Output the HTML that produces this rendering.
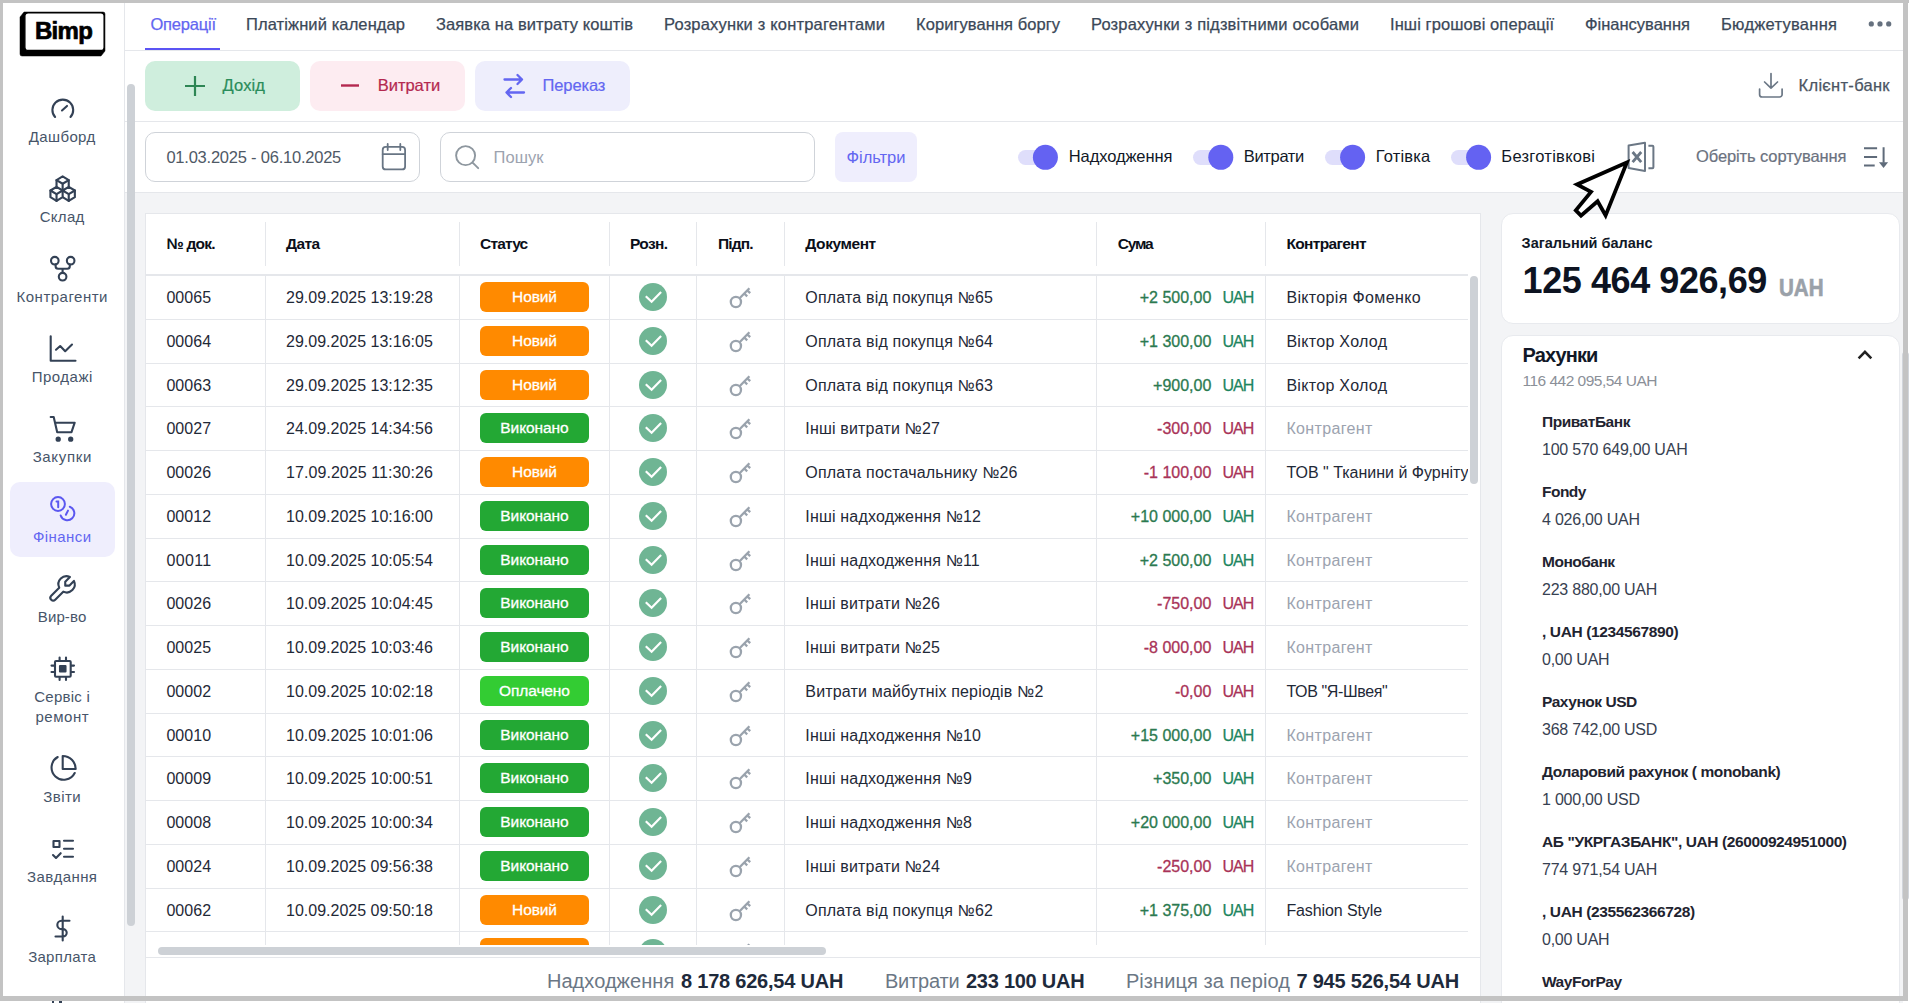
<!DOCTYPE html>
<html><head><meta charset="utf-8"><style>
html,body{margin:0;padding:0;}
body{width:1909px;height:1003px;overflow:hidden;position:relative;background:#fff;font-family:"Liberation Sans", sans-serif;}
.t{position:absolute;white-space:nowrap;line-height:1;}
.r{position:absolute;}
.clip{position:absolute;overflow:hidden;}
svg.ov{position:absolute;left:0;top:0;}
</style></head><body>
<div class="r" style="left:125px;top:193px;width:1778px;height:810px;background:#f3f4f6;"></div>
<div class="r" style="left:125px;top:50px;width:1778px;height:1px;background:#e5e7eb;"></div>
<div class="r" style="left:125px;top:121px;width:1778px;height:1px;background:#e5e7eb;"></div>
<div class="r" style="left:125px;top:192px;width:1778px;height:1px;background:#e5e7eb;"></div>
<div class="r" style="left:124px;top:0px;width:1px;height:1003px;background:#e5e7eb;"></div>
<svg class="r" style="left:0;top:0" width="120" height="70"><path d="M24 12H103A2 2 0 0 1 105 14V51L101 56H22A2 2 0 0 1 20 54V17Z" fill="#000" stroke="#000" stroke-width="0.5" stroke-linejoin="round"/><rect x="24.9" y="12.9" width="79.2" height="37.6" rx="3.2" fill="#fff" stroke="#000" stroke-width="1.3"/></svg>
<div class="t" style="left:35.00px;top:19px;font-size:24.0px;color:#000;font-weight:700;letter-spacing:-0.733px;-webkit-text-stroke:0.7px #000;">Bimp</div>
<div class="r" style="left:10px;top:482px;width:105px;height:75px;background:#efeefd;border-radius:10px;"></div>
<div class="t" style="left:28.80px;top:129px;font-size:15.0px;color:#475569;letter-spacing:0.364px;">Дашборд</div>
<div class="t" style="left:39.70px;top:209px;font-size:15.0px;color:#475569;letter-spacing:0.298px;">Склад</div>
<div class="t" style="left:16.50px;top:289px;font-size:15.0px;color:#475569;letter-spacing:0.506px;">Контрагенти</div>
<div class="t" style="left:31.70px;top:369px;font-size:15.0px;color:#475569;letter-spacing:0.501px;">Продажі</div>
<div class="t" style="left:32.65px;top:449px;font-size:15.0px;color:#475569;letter-spacing:0.666px;">Закупки</div>
<div class="t" style="left:33.00px;top:529px;font-size:15.0px;color:#6366f1;letter-spacing:0.414px;">Фінанси</div>
<div class="t" style="left:37.75px;top:609px;font-size:15.0px;color:#475569;letter-spacing:0.128px;">Вир-во</div>
<div class="t" style="left:34.25px;top:689px;font-size:15.0px;color:#475569;letter-spacing:0.241px;">Сервіс і</div>
<div class="t" style="left:35.40px;top:709px;font-size:15.0px;color:#475569;letter-spacing:0.540px;">ремонт</div>
<div class="t" style="left:43.35px;top:789px;font-size:15.0px;color:#475569;letter-spacing:0.423px;">Звіти</div>
<div class="t" style="left:27.05px;top:869px;font-size:15.0px;color:#475569;letter-spacing:0.417px;">Завдання</div>
<div class="t" style="left:28.15px;top:949px;font-size:15.0px;color:#475569;letter-spacing:0.288px;">Зарплата</div>
<div class="t" style="left:150.50px;top:16px;font-size:16.5px;color:#6366f1;letter-spacing:-0.212px;-webkit-text-stroke:0.25px currentColor;">Операції</div>
<div class="t" style="left:246.00px;top:16px;font-size:16.5px;color:#3b4858;letter-spacing:0.099px;-webkit-text-stroke:0.25px currentColor;">Платіжний календар</div>
<div class="t" style="left:436.00px;top:16px;font-size:16.5px;color:#3b4858;letter-spacing:0.089px;-webkit-text-stroke:0.25px currentColor;">Заявка на витрату коштів</div>
<div class="t" style="left:664.00px;top:16px;font-size:16.5px;color:#3b4858;letter-spacing:0.177px;-webkit-text-stroke:0.25px currentColor;">Розрахунки з контрагентами</div>
<div class="t" style="left:916.00px;top:16px;font-size:16.5px;color:#3b4858;letter-spacing:0.063px;-webkit-text-stroke:0.25px currentColor;">Коригування боргу</div>
<div class="t" style="left:1091.00px;top:16px;font-size:16.5px;color:#3b4858;letter-spacing:0.168px;-webkit-text-stroke:0.25px currentColor;">Розрахунки з підзвітними особами</div>
<div class="t" style="left:1390.00px;top:16px;font-size:16.5px;color:#3b4858;letter-spacing:0.086px;-webkit-text-stroke:0.25px currentColor;">Інші грошові операції</div>
<div class="t" style="left:1585.00px;top:16px;font-size:16.5px;color:#3b4858;letter-spacing:-0.001px;-webkit-text-stroke:0.25px currentColor;">Фінансування</div>
<div class="t" style="left:1721.00px;top:16px;font-size:16.5px;color:#3b4858;letter-spacing:0.270px;-webkit-text-stroke:0.25px currentColor;">Бюджетування</div>
<div class="r" style="left:145px;top:48px;width:75px;height:2px;background:#5b54f4;"></div>
<div class="r" style="left:145px;top:61px;width:155px;height:50px;background:#cfeedd;border-radius:10px;"></div>
<div class="r" style="left:310px;top:61px;width:155px;height:50px;background:#fdecf1;border-radius:10px;"></div>
<div class="r" style="left:475px;top:61px;width:155px;height:50px;background:#eeeefc;border-radius:10px;"></div>
<div class="t" style="left:222.50px;top:77px;font-size:16.5px;color:#2a8c5a;letter-spacing:0.152px;-webkit-text-stroke:0.2px currentColor;">Дохід</div>
<div class="t" style="left:377.70px;top:77px;font-size:16.5px;color:#b4284f;letter-spacing:-0.008px;-webkit-text-stroke:0.2px currentColor;">Витрати</div>
<div class="t" style="left:542.60px;top:77px;font-size:16.5px;color:#6366f1;letter-spacing:-0.133px;-webkit-text-stroke:0.2px currentColor;">Переказ</div>
<div class="t" style="left:1798.60px;top:77px;font-size:16.5px;color:#4b5563;letter-spacing:0.292px;-webkit-text-stroke:0.25px currentColor;">Клієнт-банк</div>
<div class="r" style="left:145px;top:132px;width:275px;height:50px;background:#fff;border:1px solid #cfd3d9;border-radius:10px;box-sizing:border-box;"></div>
<div class="t" style="left:166.40px;top:149px;font-size:16.5px;color:#4f5966;letter-spacing:-0.224px;">01.03.2025 - 06.10.2025</div>
<div class="r" style="left:440px;top:132px;width:375px;height:50px;background:#fff;border:1px solid #cfd3d9;border-radius:10px;box-sizing:border-box;"></div>
<div class="t" style="left:493.60px;top:149px;font-size:16.5px;color:#9ca3af;letter-spacing:0.016px;">Пошук</div>
<div class="r" style="left:835px;top:132px;width:82px;height:50px;background:#efeefd;border-radius:8px;"></div>
<div class="t" style="left:846.50px;top:149px;font-size:16.5px;color:#6366f1;letter-spacing:-0.018px;">Фільтри</div>
<div class="r" style="left:1017.8px;top:150px;width:34px;height:15px;background:#dfdefb;border-radius:8px;"></div>
<div class="t" style="left:1068.80px;top:148px;font-size:16.5px;color:#111827;letter-spacing:-0.098px;">Надходження</div>
<div class="r" style="left:1193.2px;top:150px;width:34px;height:15px;background:#dfdefb;border-radius:8px;"></div>
<div class="t" style="left:1243.80px;top:148px;font-size:16.5px;color:#111827;letter-spacing:-0.341px;">Витрати</div>
<div class="r" style="left:1325px;top:150px;width:34px;height:15px;background:#dfdefb;border-radius:8px;"></div>
<div class="t" style="left:1375.80px;top:148px;font-size:16.5px;color:#111827;letter-spacing:0.168px;">Готівка</div>
<div class="r" style="left:1451px;top:150px;width:34px;height:15px;background:#dfdefb;border-radius:8px;"></div>
<div class="t" style="left:1501.30px;top:148px;font-size:16.5px;color:#111827;letter-spacing:0.274px;">Безготівкові</div>
<div class="t" style="left:1696.00px;top:148px;font-size:16.5px;color:#6b7280;letter-spacing:-0.104px;-webkit-text-stroke:0.2px currentColor;">Оберіть сортування</div>
<div class="r" style="left:145px;top:213px;width:1336px;height:800px;background:#fff;border:1px solid #e5e7eb;box-sizing:border-box;"></div>
<div class="t" style="left:166.40px;top:236px;font-size:15.5px;color:#0b0f19;font-weight:700;letter-spacing:-0.734px;">№ док.</div>
<div class="t" style="left:286.00px;top:236px;font-size:15.5px;color:#0b0f19;font-weight:700;letter-spacing:-0.564px;">Дата</div>
<div class="t" style="left:480.00px;top:236px;font-size:15.5px;color:#0b0f19;font-weight:700;letter-spacing:-0.810px;">Статус</div>
<div class="t" style="left:630.00px;top:236px;font-size:15.5px;color:#0b0f19;font-weight:700;letter-spacing:-0.648px;">Розн.</div>
<div class="t" style="left:718.00px;top:236px;font-size:15.5px;color:#0b0f19;font-weight:700;letter-spacing:-0.867px;">Підп.</div>
<div class="t" style="left:805.30px;top:236px;font-size:15.5px;color:#0b0f19;font-weight:700;letter-spacing:-0.432px;">Документ</div>
<div class="t" style="left:1117.80px;top:236px;font-size:15.5px;color:#0b0f19;font-weight:700;letter-spacing:-1.200px;">Сума</div>
<div class="t" style="left:1286.40px;top:236px;font-size:15.5px;color:#0b0f19;font-weight:700;letter-spacing:-0.656px;">Контрагент</div>
<div class="r" style="left:265px;top:222px;width:1px;height:44px;background:#e5e7eb;"></div>
<div class="r" style="left:459px;top:222px;width:1px;height:44px;background:#e5e7eb;"></div>
<div class="r" style="left:609px;top:222px;width:1px;height:44px;background:#e5e7eb;"></div>
<div class="r" style="left:696px;top:222px;width:1px;height:44px;background:#e5e7eb;"></div>
<div class="r" style="left:784px;top:222px;width:1px;height:44px;background:#e5e7eb;"></div>
<div class="r" style="left:1096px;top:222px;width:1px;height:44px;background:#e5e7eb;"></div>
<div class="r" style="left:1265px;top:222px;width:1px;height:44px;background:#e5e7eb;"></div>
<div class="r" style="left:146px;top:274px;width:1322px;height:2px;background:#e5e7eb;"></div>
<div class="clip" style="left:146px;top:276px;width:1322px;height:669px;">
<div class="r" style="left:0px;top:43px;width:1322px;height:1px;background:#e5e7eb;"></div>
<div class="t" style="left:20.40px;top:14px;font-size:16.0px;color:#1f2937;letter-spacing:0.067px;">00065</div>
<div class="t" style="left:140.00px;top:14px;font-size:16.0px;color:#1f2937;letter-spacing:0.003px;">29.09.2025 13:19:28</div>
<div class="r" style="left:334px;top:6.0px;width:109px;height:30px;background:#ff8a00;border-radius:6px;"></div>
<div class="t" style="left:366.05px;top:13px;font-size:15.5px;color:#fff;letter-spacing:-0.113px;-webkit-text-stroke:0.3px #fff;">Новий</div>
<svg class="r" style="left:492.9px;top:7.00px" width="28" height="28"><circle cx="14" cy="14" r="14" fill="#6fb594"/><path d="M6.8 13.2l5.8 5.6 9.5-9.9" stroke="#fff" stroke-width="2.2" fill="none"/></svg>
<svg class="r" style="left:580px;top:7.00px" width="28" height="28"><circle cx="9.9" cy="19" r="5.1" stroke="#9aa3ad" stroke-width="2.3" fill="none"/><path d="M13.6 15.3L23.4 5.2M18.3 10.5l2.9 2.9M21.3 7.4l2.9 2.8" stroke="#9aa3ad" stroke-width="2.3" fill="none"/></svg>
<div class="t" style="left:659.30px;top:14px;font-size:16.0px;color:#1f2937;letter-spacing:0.175px;">Оплата від покупця №65</div>
<div class="t" style="left:993.71px;top:14px;font-size:16.0px;color:#2b7a50;-webkit-text-stroke:0.3px currentColor;">+2 500,00</div>
<div class="t" style="left:1076.60px;top:14px;font-size:16.0px;color:#1d8560;letter-spacing:-1.048px;-webkit-text-stroke:0.25px currentColor;">UAH</div>
<div class="t" style="left:1140.40px;top:14px;font-size:16.0px;color:#1f2937;letter-spacing:0.353px;">Вікторія Фоменко</div>
<div class="r" style="left:0px;top:87px;width:1322px;height:1px;background:#e5e7eb;"></div>
<div class="t" style="left:20.40px;top:58px;font-size:16.0px;color:#1f2937;letter-spacing:0.067px;">00064</div>
<div class="t" style="left:140.00px;top:58px;font-size:16.0px;color:#1f2937;letter-spacing:0.003px;">29.09.2025 13:16:05</div>
<div class="r" style="left:334px;top:49.75px;width:109px;height:30px;background:#ff8a00;border-radius:6px;"></div>
<div class="t" style="left:366.05px;top:57px;font-size:15.5px;color:#fff;letter-spacing:-0.113px;-webkit-text-stroke:0.3px #fff;">Новий</div>
<svg class="r" style="left:492.9px;top:50.75px" width="28" height="28"><circle cx="14" cy="14" r="14" fill="#6fb594"/><path d="M6.8 13.2l5.8 5.6 9.5-9.9" stroke="#fff" stroke-width="2.2" fill="none"/></svg>
<svg class="r" style="left:580px;top:50.75px" width="28" height="28"><circle cx="9.9" cy="19" r="5.1" stroke="#9aa3ad" stroke-width="2.3" fill="none"/><path d="M13.6 15.3L23.4 5.2M18.3 10.5l2.9 2.9M21.3 7.4l2.9 2.8" stroke="#9aa3ad" stroke-width="2.3" fill="none"/></svg>
<div class="t" style="left:659.30px;top:58px;font-size:16.0px;color:#1f2937;letter-spacing:0.175px;">Оплата від покупця №64</div>
<div class="t" style="left:993.71px;top:58px;font-size:16.0px;color:#2b7a50;-webkit-text-stroke:0.3px currentColor;">+1 300,00</div>
<div class="t" style="left:1076.60px;top:58px;font-size:16.0px;color:#1d8560;letter-spacing:-1.048px;-webkit-text-stroke:0.25px currentColor;">UAH</div>
<div class="t" style="left:1140.40px;top:58px;font-size:16.0px;color:#1f2937;letter-spacing:0.310px;">Віктор Холод</div>
<div class="r" style="left:0px;top:130px;width:1322px;height:1px;background:#e5e7eb;"></div>
<div class="t" style="left:20.40px;top:102px;font-size:16.0px;color:#1f2937;letter-spacing:0.067px;">00063</div>
<div class="t" style="left:140.00px;top:102px;font-size:16.0px;color:#1f2937;letter-spacing:0.003px;">29.09.2025 13:12:35</div>
<div class="r" style="left:334px;top:93.5px;width:109px;height:30px;background:#ff8a00;border-radius:6px;"></div>
<div class="t" style="left:366.05px;top:101px;font-size:15.5px;color:#fff;letter-spacing:-0.113px;-webkit-text-stroke:0.3px #fff;">Новий</div>
<svg class="r" style="left:492.9px;top:94.50px" width="28" height="28"><circle cx="14" cy="14" r="14" fill="#6fb594"/><path d="M6.8 13.2l5.8 5.6 9.5-9.9" stroke="#fff" stroke-width="2.2" fill="none"/></svg>
<svg class="r" style="left:580px;top:94.50px" width="28" height="28"><circle cx="9.9" cy="19" r="5.1" stroke="#9aa3ad" stroke-width="2.3" fill="none"/><path d="M13.6 15.3L23.4 5.2M18.3 10.5l2.9 2.9M21.3 7.4l2.9 2.8" stroke="#9aa3ad" stroke-width="2.3" fill="none"/></svg>
<div class="t" style="left:659.30px;top:102px;font-size:16.0px;color:#1f2937;letter-spacing:0.175px;">Оплата від покупця №63</div>
<div class="t" style="left:1007.07px;top:102px;font-size:16.0px;color:#2b7a50;-webkit-text-stroke:0.3px currentColor;">+900,00</div>
<div class="t" style="left:1076.60px;top:102px;font-size:16.0px;color:#1d8560;letter-spacing:-1.048px;-webkit-text-stroke:0.25px currentColor;">UAH</div>
<div class="t" style="left:1140.40px;top:102px;font-size:16.0px;color:#1f2937;letter-spacing:0.310px;">Віктор Холод</div>
<div class="r" style="left:0px;top:174px;width:1322px;height:1px;background:#e5e7eb;"></div>
<div class="t" style="left:20.40px;top:145px;font-size:16.0px;color:#1f2937;letter-spacing:0.067px;">00027</div>
<div class="t" style="left:140.00px;top:145px;font-size:16.0px;color:#1f2937;letter-spacing:0.003px;">24.09.2025 14:34:56</div>
<div class="r" style="left:334px;top:137.25px;width:109px;height:30px;background:#23a834;border-radius:6px;"></div>
<div class="t" style="left:354.37px;top:144px;font-size:15.5px;color:#fff;letter-spacing:-0.099px;-webkit-text-stroke:0.3px #fff;">Виконано</div>
<svg class="r" style="left:492.9px;top:138.25px" width="28" height="28"><circle cx="14" cy="14" r="14" fill="#6fb594"/><path d="M6.8 13.2l5.8 5.6 9.5-9.9" stroke="#fff" stroke-width="2.2" fill="none"/></svg>
<svg class="r" style="left:580px;top:138.25px" width="28" height="28"><circle cx="9.9" cy="19" r="5.1" stroke="#9aa3ad" stroke-width="2.3" fill="none"/><path d="M13.6 15.3L23.4 5.2M18.3 10.5l2.9 2.9M21.3 7.4l2.9 2.8" stroke="#9aa3ad" stroke-width="2.3" fill="none"/></svg>
<div class="t" style="left:659.30px;top:145px;font-size:16.0px;color:#1f2937;letter-spacing:0.176px;">Інші витрати №27</div>
<div class="t" style="left:1011.09px;top:145px;font-size:16.0px;color:#a93358;-webkit-text-stroke:0.3px currentColor;">-300,00</div>
<div class="t" style="left:1076.60px;top:145px;font-size:16.0px;color:#a93358;letter-spacing:-1.048px;-webkit-text-stroke:0.25px currentColor;">UAH</div>
<div class="t" style="left:1140.40px;top:145px;font-size:16.0px;color:#9ca3af;letter-spacing:0.356px;">Контрагент</div>
<div class="r" style="left:0px;top:218px;width:1322px;height:1px;background:#e5e7eb;"></div>
<div class="t" style="left:20.40px;top:189px;font-size:16.0px;color:#1f2937;letter-spacing:0.067px;">00026</div>
<div class="t" style="left:140.00px;top:189px;font-size:16.0px;color:#1f2937;letter-spacing:0.069px;">17.09.2025 11:30:26</div>
<div class="r" style="left:334px;top:181.0px;width:109px;height:30px;background:#ff8a00;border-radius:6px;"></div>
<div class="t" style="left:366.05px;top:188px;font-size:15.5px;color:#fff;letter-spacing:-0.113px;-webkit-text-stroke:0.3px #fff;">Новий</div>
<svg class="r" style="left:492.9px;top:182.00px" width="28" height="28"><circle cx="14" cy="14" r="14" fill="#6fb594"/><path d="M6.8 13.2l5.8 5.6 9.5-9.9" stroke="#fff" stroke-width="2.2" fill="none"/></svg>
<svg class="r" style="left:580px;top:182.00px" width="28" height="28"><circle cx="9.9" cy="19" r="5.1" stroke="#9aa3ad" stroke-width="2.3" fill="none"/><path d="M13.6 15.3L23.4 5.2M18.3 10.5l2.9 2.9M21.3 7.4l2.9 2.8" stroke="#9aa3ad" stroke-width="2.3" fill="none"/></svg>
<div class="t" style="left:659.30px;top:189px;font-size:16.0px;color:#1f2937;letter-spacing:0.181px;">Оплата постачальнику №26</div>
<div class="t" style="left:997.73px;top:189px;font-size:16.0px;color:#a93358;-webkit-text-stroke:0.3px currentColor;">-1 100,00</div>
<div class="t" style="left:1076.60px;top:189px;font-size:16.0px;color:#a93358;letter-spacing:-1.048px;-webkit-text-stroke:0.25px currentColor;">UAH</div>
<div class="t" style="left:1140.40px;top:189px;font-size:16.0px;color:#1f2937;">ТОВ &quot; Тканини й Фурнітура&quot;</div>
<div class="r" style="left:0px;top:262px;width:1322px;height:1px;background:#e5e7eb;"></div>
<div class="t" style="left:20.40px;top:233px;font-size:16.0px;color:#1f2937;letter-spacing:0.067px;">00012</div>
<div class="t" style="left:140.00px;top:233px;font-size:16.0px;color:#1f2937;letter-spacing:0.003px;">10.09.2025 10:16:00</div>
<div class="r" style="left:334px;top:224.75px;width:109px;height:30px;background:#23a834;border-radius:6px;"></div>
<div class="t" style="left:354.37px;top:232px;font-size:15.5px;color:#fff;letter-spacing:-0.099px;-webkit-text-stroke:0.3px #fff;">Виконано</div>
<svg class="r" style="left:492.9px;top:225.75px" width="28" height="28"><circle cx="14" cy="14" r="14" fill="#6fb594"/><path d="M6.8 13.2l5.8 5.6 9.5-9.9" stroke="#fff" stroke-width="2.2" fill="none"/></svg>
<svg class="r" style="left:580px;top:225.75px" width="28" height="28"><circle cx="9.9" cy="19" r="5.1" stroke="#9aa3ad" stroke-width="2.3" fill="none"/><path d="M13.6 15.3L23.4 5.2M18.3 10.5l2.9 2.9M21.3 7.4l2.9 2.8" stroke="#9aa3ad" stroke-width="2.3" fill="none"/></svg>
<div class="t" style="left:659.30px;top:233px;font-size:16.0px;color:#1f2937;letter-spacing:0.181px;">Інші надходження №12</div>
<div class="t" style="left:984.81px;top:233px;font-size:16.0px;color:#2b7a50;-webkit-text-stroke:0.3px currentColor;">+10 000,00</div>
<div class="t" style="left:1076.60px;top:233px;font-size:16.0px;color:#1d8560;letter-spacing:-1.048px;-webkit-text-stroke:0.25px currentColor;">UAH</div>
<div class="t" style="left:1140.40px;top:233px;font-size:16.0px;color:#9ca3af;letter-spacing:0.356px;">Контрагент</div>
<div class="r" style="left:0px;top:305px;width:1322px;height:1px;background:#e5e7eb;"></div>
<div class="t" style="left:20.40px;top:277px;font-size:16.0px;color:#1f2937;letter-spacing:0.364px;">00011</div>
<div class="t" style="left:140.00px;top:277px;font-size:16.0px;color:#1f2937;letter-spacing:0.003px;">10.09.2025 10:05:54</div>
<div class="r" style="left:334px;top:268.5px;width:109px;height:30px;background:#23a834;border-radius:6px;"></div>
<div class="t" style="left:354.37px;top:276px;font-size:15.5px;color:#fff;letter-spacing:-0.099px;-webkit-text-stroke:0.3px #fff;">Виконано</div>
<svg class="r" style="left:492.9px;top:269.50px" width="28" height="28"><circle cx="14" cy="14" r="14" fill="#6fb594"/><path d="M6.8 13.2l5.8 5.6 9.5-9.9" stroke="#fff" stroke-width="2.2" fill="none"/></svg>
<svg class="r" style="left:580px;top:269.50px" width="28" height="28"><circle cx="9.9" cy="19" r="5.1" stroke="#9aa3ad" stroke-width="2.3" fill="none"/><path d="M13.6 15.3L23.4 5.2M18.3 10.5l2.9 2.9M21.3 7.4l2.9 2.8" stroke="#9aa3ad" stroke-width="2.3" fill="none"/></svg>
<div class="t" style="left:659.30px;top:277px;font-size:16.0px;color:#1f2937;letter-spacing:0.180px;">Інші надходження №11</div>
<div class="t" style="left:993.71px;top:277px;font-size:16.0px;color:#2b7a50;-webkit-text-stroke:0.3px currentColor;">+2 500,00</div>
<div class="t" style="left:1076.60px;top:277px;font-size:16.0px;color:#1d8560;letter-spacing:-1.048px;-webkit-text-stroke:0.25px currentColor;">UAH</div>
<div class="t" style="left:1140.40px;top:277px;font-size:16.0px;color:#9ca3af;letter-spacing:0.356px;">Контрагент</div>
<div class="r" style="left:0px;top:349px;width:1322px;height:1px;background:#e5e7eb;"></div>
<div class="t" style="left:20.40px;top:320px;font-size:16.0px;color:#1f2937;letter-spacing:0.067px;">00026</div>
<div class="t" style="left:140.00px;top:320px;font-size:16.0px;color:#1f2937;letter-spacing:0.003px;">10.09.2025 10:04:45</div>
<div class="r" style="left:334px;top:312.25px;width:109px;height:30px;background:#23a834;border-radius:6px;"></div>
<div class="t" style="left:354.37px;top:319px;font-size:15.5px;color:#fff;letter-spacing:-0.099px;-webkit-text-stroke:0.3px #fff;">Виконано</div>
<svg class="r" style="left:492.9px;top:313.25px" width="28" height="28"><circle cx="14" cy="14" r="14" fill="#6fb594"/><path d="M6.8 13.2l5.8 5.6 9.5-9.9" stroke="#fff" stroke-width="2.2" fill="none"/></svg>
<svg class="r" style="left:580px;top:313.25px" width="28" height="28"><circle cx="9.9" cy="19" r="5.1" stroke="#9aa3ad" stroke-width="2.3" fill="none"/><path d="M13.6 15.3L23.4 5.2M18.3 10.5l2.9 2.9M21.3 7.4l2.9 2.8" stroke="#9aa3ad" stroke-width="2.3" fill="none"/></svg>
<div class="t" style="left:659.30px;top:320px;font-size:16.0px;color:#1f2937;letter-spacing:0.176px;">Інші витрати №26</div>
<div class="t" style="left:1011.09px;top:320px;font-size:16.0px;color:#a93358;-webkit-text-stroke:0.3px currentColor;">-750,00</div>
<div class="t" style="left:1076.60px;top:320px;font-size:16.0px;color:#a93358;letter-spacing:-1.048px;-webkit-text-stroke:0.25px currentColor;">UAH</div>
<div class="t" style="left:1140.40px;top:320px;font-size:16.0px;color:#9ca3af;letter-spacing:0.356px;">Контрагент</div>
<div class="r" style="left:0px;top:393px;width:1322px;height:1px;background:#e5e7eb;"></div>
<div class="t" style="left:20.40px;top:364px;font-size:16.0px;color:#1f2937;letter-spacing:0.067px;">00025</div>
<div class="t" style="left:140.00px;top:364px;font-size:16.0px;color:#1f2937;letter-spacing:0.003px;">10.09.2025 10:03:46</div>
<div class="r" style="left:334px;top:356.0px;width:109px;height:30px;background:#23a834;border-radius:6px;"></div>
<div class="t" style="left:354.37px;top:363px;font-size:15.5px;color:#fff;letter-spacing:-0.099px;-webkit-text-stroke:0.3px #fff;">Виконано</div>
<svg class="r" style="left:492.9px;top:357.00px" width="28" height="28"><circle cx="14" cy="14" r="14" fill="#6fb594"/><path d="M6.8 13.2l5.8 5.6 9.5-9.9" stroke="#fff" stroke-width="2.2" fill="none"/></svg>
<svg class="r" style="left:580px;top:357.00px" width="28" height="28"><circle cx="9.9" cy="19" r="5.1" stroke="#9aa3ad" stroke-width="2.3" fill="none"/><path d="M13.6 15.3L23.4 5.2M18.3 10.5l2.9 2.9M21.3 7.4l2.9 2.8" stroke="#9aa3ad" stroke-width="2.3" fill="none"/></svg>
<div class="t" style="left:659.30px;top:364px;font-size:16.0px;color:#1f2937;letter-spacing:0.176px;">Інші витрати №25</div>
<div class="t" style="left:997.73px;top:364px;font-size:16.0px;color:#a93358;-webkit-text-stroke:0.3px currentColor;">-8 000,00</div>
<div class="t" style="left:1076.60px;top:364px;font-size:16.0px;color:#a93358;letter-spacing:-1.048px;-webkit-text-stroke:0.25px currentColor;">UAH</div>
<div class="t" style="left:1140.40px;top:364px;font-size:16.0px;color:#9ca3af;letter-spacing:0.356px;">Контрагент</div>
<div class="r" style="left:0px;top:437px;width:1322px;height:1px;background:#e5e7eb;"></div>
<div class="t" style="left:20.40px;top:408px;font-size:16.0px;color:#1f2937;letter-spacing:0.067px;">00002</div>
<div class="t" style="left:140.00px;top:408px;font-size:16.0px;color:#1f2937;letter-spacing:0.003px;">10.09.2025 10:02:18</div>
<div class="r" style="left:334px;top:399.75px;width:109px;height:30px;background:#33cc33;border-radius:6px;"></div>
<div class="t" style="left:353.02px;top:407px;font-size:15.5px;color:#fff;letter-spacing:-0.102px;-webkit-text-stroke:0.3px #fff;">Оплачено</div>
<svg class="r" style="left:492.9px;top:400.75px" width="28" height="28"><circle cx="14" cy="14" r="14" fill="#6fb594"/><path d="M6.8 13.2l5.8 5.6 9.5-9.9" stroke="#fff" stroke-width="2.2" fill="none"/></svg>
<svg class="r" style="left:580px;top:400.75px" width="28" height="28"><circle cx="9.9" cy="19" r="5.1" stroke="#9aa3ad" stroke-width="2.3" fill="none"/><path d="M13.6 15.3L23.4 5.2M18.3 10.5l2.9 2.9M21.3 7.4l2.9 2.8" stroke="#9aa3ad" stroke-width="2.3" fill="none"/></svg>
<div class="t" style="left:659.30px;top:408px;font-size:16.0px;color:#1f2937;letter-spacing:0.167px;">Витрати майбутніх періодів №2</div>
<div class="t" style="left:1028.90px;top:408px;font-size:16.0px;color:#a93358;-webkit-text-stroke:0.3px currentColor;">-0,00</div>
<div class="t" style="left:1076.60px;top:408px;font-size:16.0px;color:#a93358;letter-spacing:-1.048px;-webkit-text-stroke:0.25px currentColor;">UAH</div>
<div class="t" style="left:1140.40px;top:408px;font-size:16.0px;color:#1f2937;letter-spacing:-0.371px;">ТОВ &quot;Я-Швея&quot;</div>
<div class="r" style="left:0px;top:480px;width:1322px;height:1px;background:#e5e7eb;"></div>
<div class="t" style="left:20.40px;top:452px;font-size:16.0px;color:#1f2937;letter-spacing:0.067px;">00010</div>
<div class="t" style="left:140.00px;top:452px;font-size:16.0px;color:#1f2937;letter-spacing:0.003px;">10.09.2025 10:01:06</div>
<div class="r" style="left:334px;top:443.5px;width:109px;height:30px;background:#23a834;border-radius:6px;"></div>
<div class="t" style="left:354.37px;top:451px;font-size:15.5px;color:#fff;letter-spacing:-0.099px;-webkit-text-stroke:0.3px #fff;">Виконано</div>
<svg class="r" style="left:492.9px;top:444.50px" width="28" height="28"><circle cx="14" cy="14" r="14" fill="#6fb594"/><path d="M6.8 13.2l5.8 5.6 9.5-9.9" stroke="#fff" stroke-width="2.2" fill="none"/></svg>
<svg class="r" style="left:580px;top:444.50px" width="28" height="28"><circle cx="9.9" cy="19" r="5.1" stroke="#9aa3ad" stroke-width="2.3" fill="none"/><path d="M13.6 15.3L23.4 5.2M18.3 10.5l2.9 2.9M21.3 7.4l2.9 2.8" stroke="#9aa3ad" stroke-width="2.3" fill="none"/></svg>
<div class="t" style="left:659.30px;top:452px;font-size:16.0px;color:#1f2937;letter-spacing:0.181px;">Інші надходження №10</div>
<div class="t" style="left:984.81px;top:452px;font-size:16.0px;color:#2b7a50;-webkit-text-stroke:0.3px currentColor;">+15 000,00</div>
<div class="t" style="left:1076.60px;top:452px;font-size:16.0px;color:#1d8560;letter-spacing:-1.048px;-webkit-text-stroke:0.25px currentColor;">UAH</div>
<div class="t" style="left:1140.40px;top:452px;font-size:16.0px;color:#9ca3af;letter-spacing:0.356px;">Контрагент</div>
<div class="r" style="left:0px;top:524px;width:1322px;height:1px;background:#e5e7eb;"></div>
<div class="t" style="left:20.40px;top:495px;font-size:16.0px;color:#1f2937;letter-spacing:0.067px;">00009</div>
<div class="t" style="left:140.00px;top:495px;font-size:16.0px;color:#1f2937;letter-spacing:0.003px;">10.09.2025 10:00:51</div>
<div class="r" style="left:334px;top:487.25px;width:109px;height:30px;background:#23a834;border-radius:6px;"></div>
<div class="t" style="left:354.37px;top:494px;font-size:15.5px;color:#fff;letter-spacing:-0.099px;-webkit-text-stroke:0.3px #fff;">Виконано</div>
<svg class="r" style="left:492.9px;top:488.25px" width="28" height="28"><circle cx="14" cy="14" r="14" fill="#6fb594"/><path d="M6.8 13.2l5.8 5.6 9.5-9.9" stroke="#fff" stroke-width="2.2" fill="none"/></svg>
<svg class="r" style="left:580px;top:488.25px" width="28" height="28"><circle cx="9.9" cy="19" r="5.1" stroke="#9aa3ad" stroke-width="2.3" fill="none"/><path d="M13.6 15.3L23.4 5.2M18.3 10.5l2.9 2.9M21.3 7.4l2.9 2.8" stroke="#9aa3ad" stroke-width="2.3" fill="none"/></svg>
<div class="t" style="left:659.30px;top:495px;font-size:16.0px;color:#1f2937;letter-spacing:0.182px;">Інші надходження №9</div>
<div class="t" style="left:1007.07px;top:495px;font-size:16.0px;color:#2b7a50;-webkit-text-stroke:0.3px currentColor;">+350,00</div>
<div class="t" style="left:1076.60px;top:495px;font-size:16.0px;color:#1d8560;letter-spacing:-1.048px;-webkit-text-stroke:0.25px currentColor;">UAH</div>
<div class="t" style="left:1140.40px;top:495px;font-size:16.0px;color:#9ca3af;letter-spacing:0.356px;">Контрагент</div>
<div class="r" style="left:0px;top:568px;width:1322px;height:1px;background:#e5e7eb;"></div>
<div class="t" style="left:20.40px;top:539px;font-size:16.0px;color:#1f2937;letter-spacing:0.067px;">00008</div>
<div class="t" style="left:140.00px;top:539px;font-size:16.0px;color:#1f2937;letter-spacing:0.003px;">10.09.2025 10:00:34</div>
<div class="r" style="left:334px;top:531.0px;width:109px;height:30px;background:#23a834;border-radius:6px;"></div>
<div class="t" style="left:354.37px;top:538px;font-size:15.5px;color:#fff;letter-spacing:-0.099px;-webkit-text-stroke:0.3px #fff;">Виконано</div>
<svg class="r" style="left:492.9px;top:532.00px" width="28" height="28"><circle cx="14" cy="14" r="14" fill="#6fb594"/><path d="M6.8 13.2l5.8 5.6 9.5-9.9" stroke="#fff" stroke-width="2.2" fill="none"/></svg>
<svg class="r" style="left:580px;top:532.00px" width="28" height="28"><circle cx="9.9" cy="19" r="5.1" stroke="#9aa3ad" stroke-width="2.3" fill="none"/><path d="M13.6 15.3L23.4 5.2M18.3 10.5l2.9 2.9M21.3 7.4l2.9 2.8" stroke="#9aa3ad" stroke-width="2.3" fill="none"/></svg>
<div class="t" style="left:659.30px;top:539px;font-size:16.0px;color:#1f2937;letter-spacing:0.182px;">Інші надходження №8</div>
<div class="t" style="left:984.81px;top:539px;font-size:16.0px;color:#2b7a50;-webkit-text-stroke:0.3px currentColor;">+20 000,00</div>
<div class="t" style="left:1076.60px;top:539px;font-size:16.0px;color:#1d8560;letter-spacing:-1.048px;-webkit-text-stroke:0.25px currentColor;">UAH</div>
<div class="t" style="left:1140.40px;top:539px;font-size:16.0px;color:#9ca3af;letter-spacing:0.356px;">Контрагент</div>
<div class="r" style="left:0px;top:612px;width:1322px;height:1px;background:#e5e7eb;"></div>
<div class="t" style="left:20.40px;top:583px;font-size:16.0px;color:#1f2937;letter-spacing:0.067px;">00024</div>
<div class="t" style="left:140.00px;top:583px;font-size:16.0px;color:#1f2937;letter-spacing:0.003px;">10.09.2025 09:56:38</div>
<div class="r" style="left:334px;top:574.75px;width:109px;height:30px;background:#23a834;border-radius:6px;"></div>
<div class="t" style="left:354.37px;top:582px;font-size:15.5px;color:#fff;letter-spacing:-0.099px;-webkit-text-stroke:0.3px #fff;">Виконано</div>
<svg class="r" style="left:492.9px;top:575.75px" width="28" height="28"><circle cx="14" cy="14" r="14" fill="#6fb594"/><path d="M6.8 13.2l5.8 5.6 9.5-9.9" stroke="#fff" stroke-width="2.2" fill="none"/></svg>
<svg class="r" style="left:580px;top:575.75px" width="28" height="28"><circle cx="9.9" cy="19" r="5.1" stroke="#9aa3ad" stroke-width="2.3" fill="none"/><path d="M13.6 15.3L23.4 5.2M18.3 10.5l2.9 2.9M21.3 7.4l2.9 2.8" stroke="#9aa3ad" stroke-width="2.3" fill="none"/></svg>
<div class="t" style="left:659.30px;top:583px;font-size:16.0px;color:#1f2937;letter-spacing:0.176px;">Інші витрати №24</div>
<div class="t" style="left:1011.09px;top:583px;font-size:16.0px;color:#a93358;-webkit-text-stroke:0.3px currentColor;">-250,00</div>
<div class="t" style="left:1076.60px;top:583px;font-size:16.0px;color:#a93358;letter-spacing:-1.048px;-webkit-text-stroke:0.25px currentColor;">UAH</div>
<div class="t" style="left:1140.40px;top:583px;font-size:16.0px;color:#9ca3af;letter-spacing:0.356px;">Контрагент</div>
<div class="r" style="left:0px;top:655px;width:1322px;height:1px;background:#e5e7eb;"></div>
<div class="t" style="left:20.40px;top:627px;font-size:16.0px;color:#1f2937;letter-spacing:0.067px;">00062</div>
<div class="t" style="left:140.00px;top:627px;font-size:16.0px;color:#1f2937;letter-spacing:0.003px;">10.09.2025 09:50:18</div>
<div class="r" style="left:334px;top:618.5px;width:109px;height:30px;background:#ff8a00;border-radius:6px;"></div>
<div class="t" style="left:366.05px;top:626px;font-size:15.5px;color:#fff;letter-spacing:-0.113px;-webkit-text-stroke:0.3px #fff;">Новий</div>
<svg class="r" style="left:492.9px;top:619.50px" width="28" height="28"><circle cx="14" cy="14" r="14" fill="#6fb594"/><path d="M6.8 13.2l5.8 5.6 9.5-9.9" stroke="#fff" stroke-width="2.2" fill="none"/></svg>
<svg class="r" style="left:580px;top:619.50px" width="28" height="28"><circle cx="9.9" cy="19" r="5.1" stroke="#9aa3ad" stroke-width="2.3" fill="none"/><path d="M13.6 15.3L23.4 5.2M18.3 10.5l2.9 2.9M21.3 7.4l2.9 2.8" stroke="#9aa3ad" stroke-width="2.3" fill="none"/></svg>
<div class="t" style="left:659.30px;top:627px;font-size:16.0px;color:#1f2937;letter-spacing:0.175px;">Оплата від покупця №62</div>
<div class="t" style="left:993.71px;top:627px;font-size:16.0px;color:#2b7a50;-webkit-text-stroke:0.3px currentColor;">+1 375,00</div>
<div class="t" style="left:1076.60px;top:627px;font-size:16.0px;color:#1d8560;letter-spacing:-1.048px;-webkit-text-stroke:0.25px currentColor;">UAH</div>
<div class="t" style="left:1140.40px;top:627px;font-size:16.0px;color:#1f2937;letter-spacing:-0.101px;">Fashion Style</div>
<div class="r" style="left:0px;top:699px;width:1322px;height:1px;background:#e5e7eb;"></div>
<div class="r" style="left:334px;top:662.25px;width:109px;height:30px;background:#ff8a00;border-radius:6px;"></div>
<div class="t" style="left:366.05px;top:669px;font-size:15.5px;color:#fff;letter-spacing:-0.113px;-webkit-text-stroke:0.3px #fff;">Новий</div>
<svg class="r" style="left:492.9px;top:663.25px" width="28" height="28"><circle cx="14" cy="14" r="14" fill="#6fb594"/><path d="M6.8 13.2l5.8 5.6 9.5-9.9" stroke="#fff" stroke-width="2.2" fill="none"/></svg>
<svg class="r" style="left:580px;top:663.25px" width="28" height="28"><circle cx="9.9" cy="19" r="5.1" stroke="#9aa3ad" stroke-width="2.3" fill="none"/><path d="M13.6 15.3L23.4 5.2M18.3 10.5l2.9 2.9M21.3 7.4l2.9 2.8" stroke="#9aa3ad" stroke-width="2.3" fill="none"/></svg>
<div class="r" style="left:119px;top:0px;width:1px;height:669px;background:#e5e7eb;"></div>
<div class="r" style="left:313px;top:0px;width:1px;height:669px;background:#e5e7eb;"></div>
<div class="r" style="left:463px;top:0px;width:1px;height:669px;background:#e5e7eb;"></div>
<div class="r" style="left:550px;top:0px;width:1px;height:669px;background:#e5e7eb;"></div>
<div class="r" style="left:638px;top:0px;width:1px;height:669px;background:#e5e7eb;"></div>
<div class="r" style="left:950px;top:0px;width:1px;height:669px;background:#e5e7eb;"></div>
<div class="r" style="left:1119px;top:0px;width:1px;height:669px;background:#e5e7eb;"></div>
</div>
<div class="r" style="left:1470px;top:276px;width:8px;height:208px;background:#cdd1d6;border-radius:4px;"></div>
<div class="r" style="left:158px;top:947px;width:668px;height:8px;background:#cdd1d6;border-radius:4px;"></div>
<div class="r" style="left:146px;top:957px;width:1334px;height:1px;background:#e5e7eb;"></div>
<div class="t" style="left:546.90px;top:971px;font-size:20.0px;color:#6b7785;letter-spacing:0.060px;">Надходження</div>
<div class="t" style="left:681.00px;top:971px;font-size:20.0px;color:#1e2a3b;font-weight:700;letter-spacing:-0.219px;">8 178 626,54 UAH</div>
<div class="t" style="left:884.90px;top:971px;font-size:20.0px;color:#6b7785;letter-spacing:-0.185px;">Витрати</div>
<div class="t" style="left:966.00px;top:971px;font-size:20.0px;color:#1e2a3b;font-weight:700;letter-spacing:-0.259px;">233 100 UAH</div>
<div class="t" style="left:1125.90px;top:971px;font-size:20.0px;color:#6b7785;letter-spacing:0.078px;">Різниця за період</div>
<div class="t" style="left:1296.40px;top:971px;font-size:20.0px;color:#1e2a3b;font-weight:700;letter-spacing:-0.199px;">7 945 526,54 UAH</div>
<div class="r" style="left:51.5px;top:1001px;width:2px;height:2px;background:#334155;"></div>
<div class="r" style="left:58.5px;top:1001px;width:3px;height:2px;background:#334155;"></div>
<div class="r" style="left:127px;top:84px;width:8px;height:842px;background:#cdd1d6;border-radius:4px;"></div>
<div class="r" style="left:1501px;top:213px;width:399px;height:111px;background:#fff;border:1px solid #e8eaee;border-radius:12px;box-sizing:border-box;"></div>
<div class="t" style="left:1521.60px;top:236px;font-size:14.5px;color:#111827;font-weight:700;letter-spacing:-0.007px;">Загальний баланс</div>
<div class="t" style="left:1522.60px;top:263px;font-size:36.0px;color:#0d1321;font-weight:700;letter-spacing:-0.429px;">125 464 926,69</div>
<div class="t" style="left:1779.20px;top:277px;font-size:23.0px;color:#9aa1a9;font-weight:700;transform:scaleX(0.8951);transform-origin:0 0;-webkit-text-stroke:0.6px currentColor;">UAH</div>
<div class="r" style="left:1501px;top:335px;width:399px;height:700px;background:#fff;border:1px solid #e8eaee;border-radius:12px;box-sizing:border-box;"></div>
<div class="t" style="left:1522.50px;top:345px;font-size:20.0px;color:#111827;font-weight:700;letter-spacing:-0.866px;">Рахунки</div>
<div class="t" style="left:1522.50px;top:373px;font-size:15.5px;color:#8b9098;letter-spacing:-0.511px;">116 442 095,54 UAH</div>
<div class="t" style="left:1542.00px;top:414px;font-size:15.5px;color:#1f2430;font-weight:700;letter-spacing:-0.463px;">ПриватБанк</div>
<div class="t" style="left:1542.00px;top:442px;font-size:16.0px;color:#374151;letter-spacing:-0.220px;">100 570 649,00 UAH</div>
<div class="t" style="left:1542.00px;top:484px;font-size:15.5px;color:#1f2430;font-weight:700;letter-spacing:-0.523px;">Fondy</div>
<div class="t" style="left:1542.00px;top:512px;font-size:16.0px;color:#374151;letter-spacing:-0.229px;">4 026,00 UAH</div>
<div class="t" style="left:1542.00px;top:554px;font-size:15.5px;color:#1f2430;font-weight:700;letter-spacing:-0.492px;">Монобанк</div>
<div class="t" style="left:1542.00px;top:582px;font-size:16.0px;color:#374151;letter-spacing:-0.228px;">223 880,00 UAH</div>
<div class="t" style="left:1542.00px;top:624px;font-size:15.5px;color:#1f2430;font-weight:700;letter-spacing:-0.379px;">, UAH (1234567890)</div>
<div class="t" style="left:1542.00px;top:652px;font-size:16.0px;color:#374151;letter-spacing:-0.248px;">0,00 UAH</div>
<div class="t" style="left:1542.00px;top:694px;font-size:15.5px;color:#1f2430;font-weight:700;letter-spacing:-0.449px;">Рахунок USD</div>
<div class="t" style="left:1542.00px;top:722px;font-size:16.0px;color:#374151;letter-spacing:-0.228px;">368 742,00 USD</div>
<div class="t" style="left:1542.00px;top:764px;font-size:15.5px;color:#1f2430;font-weight:700;letter-spacing:-0.402px;">Доларовий рахунок ( monobank)</div>
<div class="t" style="left:1542.00px;top:792px;font-size:16.0px;color:#374151;letter-spacing:-0.229px;">1 000,00 USD</div>
<div class="t" style="left:1542.00px;top:834px;font-size:15.5px;color:#1f2430;font-weight:700;letter-spacing:-0.399px;">АБ &quot;УКРГАЗБАНК&quot;, UAH (26000924951000)</div>
<div class="t" style="left:1542.00px;top:862px;font-size:16.0px;color:#374151;letter-spacing:-0.228px;">774 971,54 UAH</div>
<div class="t" style="left:1542.00px;top:904px;font-size:15.5px;color:#1f2430;font-weight:700;letter-spacing:-0.380px;">, UAH (235562366728)</div>
<div class="t" style="left:1542.00px;top:932px;font-size:16.0px;color:#374151;letter-spacing:-0.248px;">0,00 UAH</div>
<div class="t" style="left:1542.00px;top:974px;font-size:15.5px;color:#1f2430;font-weight:700;letter-spacing:-0.472px;">WayForPay</div>
<div class="r" style="left:1902px;top:352px;width:7px;height:548px;background:#d1d5db;border-radius:3px;"></div>
<div class="r" style="left:0px;top:0px;width:1909px;height:3px;background:#c3c3c3;"></div>
<div class="r" style="left:0px;top:0px;width:3px;height:1001px;background:#c3c3c3;"></div>
<div class="r" style="left:1903px;top:0px;width:5px;height:1001px;background:#c3c3c3;"></div>
<div class="r" style="left:0px;top:996px;width:1908px;height:5px;background:#c3c3c3;"></div>
<svg class="ov" width="1909" height="1003" viewBox="0 0 1909 1003">
<circle cx="1871.3" cy="23.9" r="2.6" fill="#66717f"/>
<circle cx="1880.0" cy="23.9" r="2.6" fill="#66717f"/>
<circle cx="1888.7" cy="23.9" r="2.6" fill="#66717f"/>
<path d="M195 76v20M185 86h20" stroke="#2e8654" stroke-width="2.2" fill="none"/>
<path d="M341 85.5h18" stroke="#b4284f" stroke-width="2.4" fill="none"/>
<path d="M504.5 79.5h17.5M517.5 75l4.5 4.5-4.5 4.5M524 92.5h-17.5M511 88l-4.5 4.5 4.5 4.5" stroke="#6366f1" stroke-width="2.3" fill="none" stroke-linecap="round" stroke-linejoin="round"/>
<path d="M1771 73.6v14.5M1764.6 82l6.4 6.1 6.5-6.1M1759.6 89.1v5.4a2.5 2.5 0 0 0 2.5 2.5h17.5a2.5 2.5 0 0 0 2.5-2.5v-5.4" stroke="#6b7785" stroke-width="1.7" fill="none" stroke-linecap="round" stroke-linejoin="round"/>
<rect x="382.7" y="146.9" width="22.4" height="22.5" rx="3" stroke="#687584" stroke-width="1.8" fill="none"/><path d="M382.7 154.2h22.4M387.7 144v6M400.3 144v6" stroke="#687584" stroke-width="1.8" fill="none" stroke-linecap="round"/>
<circle cx="465.6" cy="155.6" r="9.5" stroke="#8e979f" stroke-width="1.9" fill="none"/><path d="M472.6 162.6l5.6 5.6" stroke="#8e979f" stroke-width="1.9" fill="none" stroke-linecap="round"/>
<circle cx="1045.4" cy="157.3" r="12.5" fill="#6462f2"/>
<circle cx="1220.8" cy="157.3" r="12.5" fill="#6462f2"/>
<circle cx="1352.6" cy="157.3" r="12.5" fill="#6462f2"/>
<circle cx="1478.6" cy="157.3" r="12.5" fill="#6462f2"/>
<path d="M1628.6 145.4L1645 142.8V171.1L1628.6 168.1Z" stroke="#6b7785" stroke-width="2" fill="none" stroke-linejoin="round"/><path d="M1648.4 145.8h4a1 1 0 0 1 1 1v20.5a1 1 0 0 1-1 1h-4" stroke="#6b7785" stroke-width="2" fill="none"/><path d="M1632.6 152l8.6 10.2M1641.2 152l-8.6 10.2" stroke="#6b7785" stroke-width="2.8" fill="none"/>
<path d="M1864 148.2h13.1M1864 156.9h13.1M1864 165.5h10.7M1883.6 147.2v15.5" stroke="#5f6b7a" stroke-width="2" fill="none"/><path d="M1879 162.3h9.1l-4.55 5.7z" fill="#5f6b7a"/>
<path d="M1858.6 358.3L1864.95 351.8L1871.3 358.3" stroke="#222" stroke-width="2.6" fill="none"/>
<path d="M1626.8 162.6L1577 184.4L1591 191.9L1575.8 210.3L1581 215.6L1597.6 201.2L1605.6 215.4Z" fill="#fff" stroke="#000" stroke-width="3.8" stroke-linejoin="miter" stroke-miterlimit="3"/>
<g stroke="#334155" stroke-width="2.1" fill="none" stroke-linecap="round" stroke-linejoin="round">
<path d="M55.1 117 A10.4 10.4 0 1 1 70.5 117"/><path d="M62 110.5L67 105.9"/>
<g transform="translate(48 174) scale(1.22)" stroke-width="1.75"><path d="M7 16.5l-5 -3l5 -3l5 3v5.5l-5 3z"/><path d="M2 13.5v5.5l5 3"/><path d="M7 16.545l5 -3.03"/><path d="M17 16.5l-5 -3l5 -3l5 3v5.5l-5 3z"/><path d="M12 19l5 3"/><path d="M17 16.5l5 -3"/><path d="M12 13.5v-5.5l-5 -3l5 -3l5 3v5.5"/><path d="M7 5.03v5.455"/><path d="M12 8l5 -3"/></g>
<g stroke-width="2.1"><circle cx="54.8" cy="260.7" r="3.8"/><circle cx="70.65" cy="260.7" r="3.8"/><circle cx="62.6" cy="276.7" r="3.8"/><path d="M55.6 264.4V266.2A2.5 2.5 0 0 0 58.1 268.7H67.3A2.5 2.5 0 0 0 69.8 266.2V264.4M62.6 268.7V272.9"/></g>
<path d="M50.7 336.2V360.7H75.5"/><path d="M56 349.7L60.2 346L65.2 351.2L72 344.5"/>
<path d="M50.7 417h3l3.5 15.2h14.3l3.2-9.5H55"/><circle cx="58.2" cy="439.2" r="1.6" fill="#334155"/><circle cx="70.7" cy="439.2" r="1.6" fill="#334155"/>
<g transform="translate(78.6 572.3) scale(-1.335 1.335)" stroke-width="1.6"><path d="M7 10h3v-3l-3.5 -3.5a6 6 0 0 1 8 8l6 6a2 2 0 0 1 -3 3l-6 -6a6 6 0 0 1 -8 -8l3.5 3.5"/></g>
<rect x="55" y="661" width="15.7" height="15.7" rx="1"/><rect x="60" y="666" width="5.5" height="5.5" fill="#334155"/><path d="M59.6 657.5v3M66 657.5v3M59.6 677v3M66 677v3M51.5 665.6h3M51.5 672h3M71 665.6h3M71 672h3"/>
<path d="M57.7 757 A12.2 12.2 0 1 0 74.7 773"/><path d="M62.7 756 V769 H75.7 A13 13 0 0 0 62.7 756Z"/>
<rect x="53.5" y="841" width="6" height="6"/><path d="M64 840.8h9M64 848.8h9M64 856.8h9M53 855l3 3 4.7-4.8"/>
<path d="M69.5 920.7H61.5A4.2 4.2 0 0 0 61.5 929.1H63A3.7 3.7 0 0 1 63 936.5H55.5M62.7 916.5V940.5"/>
</g>
<g stroke="#5b57f0" stroke-width="2" fill="none" stroke-linecap="round"><circle cx="58" cy="504" r="6.9"/><path d="M56.5 501.5h1.7v5.8"/><path d="M69.8 506.7A7 7 0 1 1 60.7 515.5"/><path d="M68 510.6L65.9 514.8"/></g>
</svg>
</body></html>
